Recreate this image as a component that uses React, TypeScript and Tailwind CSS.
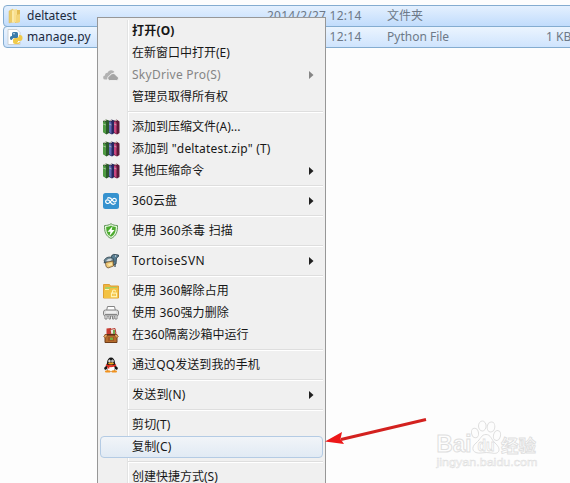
import type { ReactNode } from 'react';

const Books = () => (
  <svg width="17" height="16" viewBox="0 0 17 16">
    <path d="M0 2 3 .5l3 1V14l-2.500 1.500L0 13z" fill="#2b5a2a" />
    <path d="M0 2.500l3 1V15L0 13z" fill="#4d9a41" />
    <path d="M6 2l2.500-1.500 3 1V14L9 15.500 6 14z" fill="#27275f" />
    <path d="M6 2.500l2.500 1V15L6 13z" fill="#5c6ab4" />
    <path d="M11 2l2.500-1.500 3 2V14L14 15.500 11 14z" fill="#5e1738" />
    <path d="M11 2.500l2.500 1V15L11 13z" fill="#c9467f" />
    <path d="M1 2l2.500-1M7 2l2-1M12 2l2-1" stroke="#e2d8c4" strokeWidth=".9" />
    <path d="M0 5l3 1M6 5l2.500 1M11 5l2.500 1" stroke="#cbd5c6" strokeWidth=".6" />
  </svg>
);

const Clouds = () => (
  <svg width="16" height="16" viewBox="0 0 16 16">
    <path d="M4 12.500H2.300a2 2 0 0 1-.3-4 2.700 2.700 0 0 1 2.500-2.800A4 4 0 0 1 11.500 5L8 7z" fill="#b2b2b2" />
    <path d="M6.500 13.500a2.400 2.400 0 0 1 .2-4.700 3.600 3.600 0 0 1 6.800.2 2.300 2.300 0 0 1 .3 4.500z" fill="#a4a4a4" stroke="#f0f0f0" strokeWidth=".9" />
  </svg>
);

const CloudDisk = () => (
  <svg width="16" height="16" viewBox="0 0 16 16">
    <rect width="16" height="16" rx="2.500" fill="#3692cf" />
    <path d="M4.500 5.200C7 3.500 8.500 5.800 10 8c1.200 1.700 3.300.8 3.300-.8 0-1.800-2.300-2.500-3.600-1L6.500 9.700C5 11.300 2.600 10.200 2.600 8.500c0-1.800 2.400-2.300 3.700-.8l1.400 1.900c1.300 1.800 3 2 4.500 1" fill="none" stroke="#fff" strokeWidth="1.200" strokeLinecap="round" />
  </svg>
);

const Shield = () => (
  <svg width="16" height="16" viewBox="0 0 16 16">
    <path d="M8 .7c2 1.400 4 1.800 6.500 1.800.2 6-1.100 10.500-6.500 13C2.600 13 1.300 8.500 1.500 2.500 4 2.500 6 2.100 8 .7z" fill="#e4f7da" stroke="#64985d" />
    <path d="M8 2.500c1.500 1 3 1.300 4.800 1.400 0 4.600-1.200 8-4.800 9.900-3.600-1.900-4.800-5.300-4.800-9.900C5 3.800 6.500 3.500 8 2.500z" fill="#4cab2f" />
    <path d="M9.500 3.200 4.500 8.700h3L6.500 13 11.500 7H8.700z" fill="#fff" />
  </svg>
);

const Tortoise = () => (
  <svg width="16" height="16" viewBox="0 0 16 16">
    <path d="M8.500 5C8 2 10 1 12 1.500L15.500 2v1.500l-2 1.500-.5 6-3 1z" fill="#587d91" stroke="#263a46" strokeWidth=".8" />
    <path d="M1 8c1-4 7-5.500 9.500-2L11 9 3 10z" fill="#6b8795" stroke="#354650" strokeWidth=".8" />
    <path d="M3 8l2-2 3-.5 1 1.500-3 1.500z" fill="#d2dada" />
    <path d="M2.500 9.500 10 8l.5 5-5.500 2-2-1.500z" fill="#f0cb79" stroke="#71532f" strokeWidth=".8" />
    <path d="M5 11l4-1v2l-3 1z" fill="#fae7ae" />
    <path d="M12 11v3M.8 9.500h2" stroke="#40545e" strokeWidth="1.300" />
    <path d="M12 3h1.200" stroke="#fff" />
  </svg>
);

const UnlockFolder = () => (
  <svg width="16" height="16" viewBox="0 0 16 16">
    <path d="M.5 1.500h6l1 1.500h8v12H.5z" fill="#efb33e" stroke="#dda034" />
    <path d="M2 4h12v4H2z" fill="#a8cf62" />
    <path d="M1 6.500h5L7.500 5H15v10H1z" fill="#f3c243" />
    <path d="M2 6.500h4" stroke="#fff1ae" />
    <path d="M9.500 10V8.500a1.500 1.500 0 0 1 3 0M8.500 10.200h5v3.500h-5z" fill="none" stroke="#fff3b5" strokeWidth="1.200" />
    <path d="M11 11.500v1" stroke="#fff3b5" />
  </svg>
);

const Shredder = () => (
  <svg width="16" height="16" viewBox="0 0 16 16">
    <path d="M3.500 6l1-4.500h7l1 4.500" fill="#fff" stroke="#858585" />
    <rect x=".5" y="5" width="15" height="6" rx="2" fill="#dedede" stroke="#858585" />
    <path d="M3 7h10" stroke="#fff" />
    <path d="M2 9.500h12" stroke="#858585" />
    <path d="M2 11v3h2v-3m2 0v3h1.500v-3m2 0v3H11v-3m1 0v3h2v-3" fill="#fff" stroke="#858585" />
  </svg>
);

const Sandbox = () => (
  <svg width="16" height="16" viewBox="0 0 16 16">
    <path d="M3.500 1.500 8 1v7H3.500z" fill="#c83c32" />
    <path d="M7 2.500l5-1 1 5-5 1z" fill="#e9e5dc" stroke="#b83b30" />
    <path d="M10 3h2v4h-2z" fill="#71a94a" />
    <path d="M2 7.500h12v8H2z" fill="#b56c2c" stroke="#6e3c19" />
    <path d="M2.500 7.500.5 9.500l2 1.500L5 8zM13.500 7.500l2 2-2 1.500L11 8z" fill="#dda05c" stroke="#84491d" strokeWidth=".6" />
    <path d="M4 7h8v1.500H4z" fill="#5b2d17" />
    <path d="M5 10h6v4H5z" fill="#a15724" />
    <path d="M7 10.500h3v2.500H7z" fill="#79ae3e" />
  </svg>
);

const Penguin = () => (
  <svg width="16" height="18" viewBox="0 0 16 16">
    <path d="M4 6c0-7.500 8-7.500 8 0l1 3 2 2-1 2-2-1-1 3H5l-1-3-2 1-1-2 2-2z" fill="#151515" />
    <ellipse cx="8" cy="11.500" rx="3.700" ry="3.200" fill="#fff" />
    <ellipse cx="6.500" cy="4" rx="1.200" ry="1.500" fill="#fff" />
    <ellipse cx="9.500" cy="4" rx="1.200" ry="1.500" fill="#fff" />
    <path d="M6.700 4h.6M9 4h.6" stroke="#111" />
    <ellipse cx="8" cy="6.400" rx="3" ry="1" fill="#f1a51d" />
    <path d="M3 7.200q5 2.300 10 0l.3 1.900q-5.300 2.200-10.600 0z" fill="#e32f23" />
    <path d="M5.500 9v2.500" stroke="#e32f23" strokeWidth="1.800" />
    <ellipse cx="4.800" cy="14.400" rx="2.900" ry="1.200" fill="#f1921d" />
    <ellipse cx="11.200" cy="14.400" rx="2.900" ry="1.200" fill="#f1921d" />
  </svg>
);

const Folder = () => (
  <svg width="16" height="16" viewBox="0 0 16 16">
    <path d="M2 3l4-2v13l-4 1z" fill="#eccb67" stroke="#d9bb63" strokeWidth=".5" />
    <path d="M8 2h5v12l-5 1z" fill="#e3bc52" />
    <path d="M5 2l5-1v13l-5 1z" fill="#f8df8f" />
    <path d="M9 7l4-1v8l-4 1z" fill="#f3d478" />
    <path d="M6 3v11" stroke="#fff4c0" />
  </svg>
);

const PythonFile = () => (
  <svg width="17" height="16" viewBox="0 0 17 16">
    <path d="M1 .5h9l3 3v12H1z" fill="#fff" stroke="#c2c7ca" strokeWidth=".8" />
    <path d="M5 7V5c0-2 1-2 3-2s3 0 3 2v3c0 1-1 1-2 1H7c-1 0-2 1-2 2-2 0-2-1-2-2s0-2 2-2z" fill="#397aaa" />
    <path d="M12 6c2 0 3.500 0 3.500 3s-2 3-3.500 3h-1v1h2c0 2-1 2-3 2s-4 0-4-2v-2c0-1 1-2 2-2h2c1 0 2-1 2-3z" fill="#f0ca4a" />
    <circle cx="7" cy="4.700" r=".7" fill="#fff" />
    <circle cx="11" cy="13.500" r=".6" fill="#fff" />
  </svg>
);

const Watermark = () => (
  <svg className="absolute top-[420px] left-[435px]" width="104" height="50" viewBox="0 0 104 50" fill="#fdfdfd" stroke="#dfdfdf">
    <text x="1.500" y="32" fontFamily="Liberation Sans" fontSize="23" fontWeight="bold" textLength="35" lengthAdjust="spacingAndGlyphs">Bai</text>
    <ellipse cx="40" cy="13" rx="3.500" ry="4.800" transform="rotate(-12 40 13)" />
    <ellipse cx="47.300" cy="6" rx="3.800" ry="5" />
    <ellipse cx="56" cy="7" rx="3.800" ry="5" transform="rotate(12 56 7)" />
    <ellipse cx="62" cy="15.500" rx="3.500" ry="5" transform="rotate(15 62 15.500)" />
    <path d="M51 14.500c5 0 5 5 9 8.500 7 6 4 12-3 10q-6-1-11 0c-8 1-11-5-5-10 5-4 5-8.500 10-8.500z" />
    <text x="42.500" y="31" fontFamily="Liberation Sans" fontSize="16" fontWeight="bold" textLength="17" lengthAdjust="spacingAndGlyphs" strokeWidth=".8">du</text>
    <text x="66" y="31.500" fontFamily="Noto Sans CJK SC" fontSize="17.500" fontWeight="bold" textLength="35" strokeWidth=".9">经验</text>
    <text x="1.500" y="45.500" fontFamily="Liberation Sans" fontSize="11" textLength="101" lengthAdjust="spacingAndGlyphs" strokeWidth=".5">jingyan.baidu.com</text>
  </svg>
);

type Entry = {
  label: string;
  icon?: ReactNode;
  submenu?: boolean;
  disabled?: boolean;
  bold?: boolean;
  selected?: boolean;
  tracking?: string;
};

const groups: Entry[][] = [
  [
    { label: '打开(O)', bold: true, tracking: 'tracking-[0.2px]' },
    { label: '在新窗口中打开(E)' },
    { label: 'SkyDrive Pro(S)', icon: <Clouds />, submenu: true, disabled: true, tracking: 'tracking-[0.27px]' },
    { label: '管理员取得所有权' },
  ],
  [
    { label: '添加到压缩文件(A)...', icon: <Books /> },
    { label: '添加到 "deltatest.zip" (T)', icon: <Books />, tracking: 'tracking-[0.17px]' },
    { label: '其他压缩命令', icon: <Books />, submenu: true },
  ],
  [{ label: '360云盘', icon: <CloudDisk />, submenu: true, tracking: 'tracking-[0.1px]' }],
  [{ label: '使用 360杀毒 扫描', icon: <Shield />, tracking: 'tracking-[0.2px]' }],
  [{ label: 'TortoiseSVN', icon: <Tortoise />, submenu: true, tracking: 'tracking-[0.45px]' }],
  [
    { label: '使用 360解除占用', icon: <UnlockFolder />, tracking: 'tracking-[0.12px]' },
    { label: '使用 360强力删除', icon: <Shredder />, tracking: 'tracking-[0.12px]' },
    { label: '在360隔离沙箱中运行', icon: <Sandbox /> },
  ],
  [{ label: '通过QQ发送到我的手机', icon: <Penguin />, tracking: 'tracking-[0.1px]' }],
  [{ label: '发送到(N)', submenu: true, tracking: 'tracking-[0.2px]' }],
  [
    { label: '剪切(T)', tracking: 'tracking-[0.15px]' },
    { label: '复制(C)', selected: true, tracking: 'tracking-[0.15px]' },
  ],
  [{ label: '创建快捷方式(S)' }],
];

const MenuRow = ({ entry }: { entry: Entry }) => (
  <div className={`flex h-[22px] items-center rounded-sm border pl-[1px] ${entry.selected ? 'border-[#b4cbe4] bg-linear-to-b from-[#f1f4f8] to-[#e1eaf4]' : 'border-transparent'}`}>
    <div className="flex w-[18px] shrink-0 items-center justify-center">{entry.icon}</div>
    <span className={`ml-[12px] flex-1 whitespace-pre ${entry.bold ? 'font-bold' : ''} ${entry.disabled ? 'text-[#858585]' : 'text-[#171717]'} ${entry.tracking ?? ''}`}>{entry.label}</span>
    {entry.submenu && (
      <svg className="mr-[8px]" width="5" height="8" viewBox="0 0 5 8">
        <path d="M0 0 4.500 4 0 8z" fill={entry.disabled ? '#858585' : '#202020'} />
      </svg>
    )}
  </div>
);

export default function App() {
  return (
    <main className="relative h-[483px] w-[570px] overflow-hidden bg-[#fdfdfd] pt-[5px] font-['Noto_Sans','Noto_Sans_CJK_SC',sans-serif] text-[12px] leading-[20px]">
      <div className="ml-[3px] flex h-[22px] w-[580px] items-center rounded-sm border border-[#84acd0] bg-linear-to-b from-[#e4f0fe] to-[#c1dcfc] pl-[3px]">
        <Folder />
        <span className="ml-[4px] w-[240px] text-[#1c2a3c]">deltatest</span>
        <span className="w-[120px] tracking-[0.25px] text-[#6d7988]">2014/2/27 12:14</span>
        <span className="text-[#6d7988]">文件夹</span>
      </div>
      <div className="ml-[3px] -mt-px flex h-[22px] w-[580px] items-center rounded-sm border border-[#84acd0] bg-linear-to-b from-[#ebf4fe] to-[#cfe4fd] pl-[3px]">
        <PythonFile />
        <span className="ml-[3px] w-[240px] tracking-[0.1px] text-[#1c2a3c]">manage.py</span>
        <span className="w-[120px] tracking-[0.25px] text-[#6d7988]">2014/2/27 12:14</span>
        <span className="w-[159px] text-[#6d7988]">Python File</span>
        <span className="shrink-0 text-[#6d7988]">1 KB</span>
      </div>

      <nav className="absolute top-[17px] left-[97px] h-[480px] w-[229px] border border-[#979797] bg-[#f0f0f0] p-[2px]">
        <div className="bg-[linear-gradient(90deg,transparent_27px,#e2e3e3_27px,#e2e3e3_28px,#fff_28px,#fff_29px,transparent_29px)]">
          {groups.map((group, index) => (
            <section key={group[0].label}>
              {index > 0 && (
                <div className="flex h-[8px] items-center pl-[28px]">
                  <div className="h-[2px] w-full border-t border-[#dedede] bg-white" />
                </div>
              )}
              {group.map((entry) => <MenuRow key={entry.label} entry={entry} />)}
            </section>
          ))}
        </div>
      </nav>

      <svg className="absolute top-[413px] left-[324px]" width="105" height="34" viewBox="0 0 105 34">
        <path d="M102 6.500 17 26.500" stroke="#d3211f" strokeWidth="3" />
        <path d="M1 28.500 18 19 16.500 26 20 31z" fill="#ed1719" />
      </svg>
      <Watermark />
    </main>
  );
}
